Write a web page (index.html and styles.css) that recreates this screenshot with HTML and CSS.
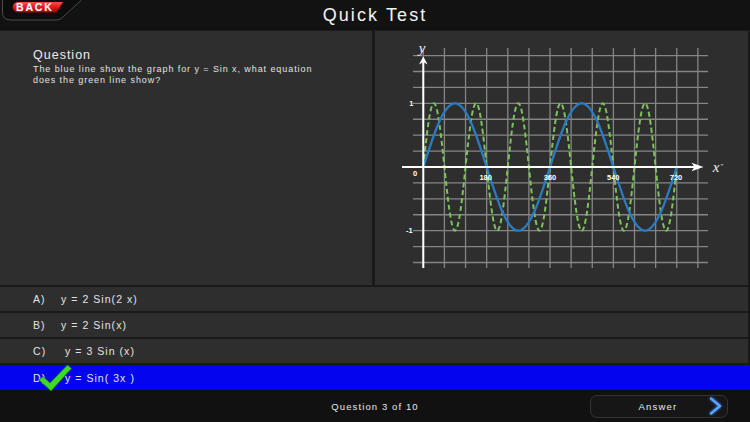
FILE: index.html
```html
<!DOCTYPE html>
<html>
<head>
<meta charset="utf-8">
<title>Quick Test</title>
<link rel="stylesheet" href="styles.css">
</head>
<body>
<div class="app">
  <header class="header">
    <a class="back">
      <svg class="back-shape" width="84" height="22" viewBox="0 0 84 22">
        <defs>
          <linearGradient id="redg" x1="0" y1="0" x2="0" y2="1">
            <stop offset="0" stop-color="#ff5050"/>
            <stop offset="0.5" stop-color="#e31515"/>
            <stop offset="1" stop-color="#900404"/>
          </linearGradient>
        </defs>
        <path d="M2.5 0 V12 Q2.5 20 10.5 20 H56 Q60 20 63 17 L81.5 0" fill="#0c0c0c" stroke="#4c4c4c" stroke-width="1"/>
        <path d="M18 2 H63 L56.5 12.5 H18 A5.25 5.25 0 0 1 18 2 Z" fill="url(#redg)"/>
      </svg>
      <span class="back-label">BACK</span>
    </a>
    <h1 class="title">Quick Test</h1>
  </header>

  <main class="main">
    <section class="question">
      <h2 class="q-title">Question</h2>
      <p class="q-text">The blue line show the graph for y = Sin x, what equation does the green line show?</p>
    </section>
    <section class="graph">
      <svg width="373" height="254" viewBox="0 0 373 254">
        <path d="M48.3 17V237 M69.42 17V237 M90.54 17V237 M111.66 17V237 M132.78 17V237 M153.9 17V237 M175.02 17V237 M196.14 17V237 M217.26 17V237 M238.38 17V237 M259.5 17V237 M280.62 17V237 M301.74 17V237 M322.86 17V237
                 M38 24.56H333 M38 40.48H333 M38 56.4H333 M38 72.32H333 M38 88.24H333 M38 104.16H333 M38 120.08H333
                 M38 151.92H333 M38 167.84H333 M38 183.76H333 M38 199.68H333 M38 215.6H333 M38 231.52H333"
              stroke="#858585" stroke-width="1.3" fill="none"/>
        <path d="M48.3 136
                 c3.44 -32.63 6.74 -63.7 10.56 -63.7 c3.82 0 7.12 31.07 10.56 63.7 c3.44 32.63 6.74 63.7 10.56 63.7 c3.82 0 7.12 -31.07 10.56 -63.7
                 c3.44 -32.63 6.74 -63.7 10.56 -63.7 c3.82 0 7.12 31.07 10.56 63.7 c3.44 32.63 6.74 63.7 10.56 63.7 c3.82 0 7.12 -31.07 10.56 -63.7
                 c3.44 -32.63 6.74 -63.7 10.56 -63.7 c3.82 0 7.12 31.07 10.56 63.7 c3.44 32.63 6.74 63.7 10.56 63.7 c3.82 0 7.12 -31.07 10.56 -63.7
                 c3.44 -32.63 6.74 -63.7 10.56 -63.7 c3.82 0 7.12 31.07 10.56 63.7 c3.44 32.63 6.74 63.7 10.56 63.7 c3.82 0 7.12 -31.07 10.56 -63.7
                 c3.44 -32.63 6.74 -63.7 10.56 -63.7 c3.82 0 7.12 31.07 10.56 63.7 c3.44 32.63 6.74 63.7 10.56 63.7 c3.82 0 7.12 -31.07 10.56 -63.7
                 c3.44 -32.63 6.74 -63.7 10.56 -63.7 c3.82 0 7.12 31.07 10.56 63.7 c3.44 32.63 6.74 63.7 10.56 63.7 c3.82 0 7.12 -31.07 10.56 -63.7"
              stroke="#7cc25a" stroke-width="2" stroke-dasharray="5 3" fill="none"/>
        <path d="M48.3 136
                 c10.33 -32.63 20.22 -63.7 31.68 -63.7 c11.46 0 21.35 31.07 31.68 63.7 c10.33 32.63 20.22 63.7 31.68 63.7 c11.46 0 21.35 -31.07 31.68 -63.7
                 c10.33 -32.63 20.22 -63.7 31.68 -63.7 c11.46 0 21.35 31.07 31.68 63.7 c10.33 32.63 20.22 63.7 31.68 63.7 c11.46 0 21.35 -31.07 31.68 -63.7"
              stroke="#2b7bc2" stroke-width="2.3" fill="none"/>
        <path d="M48.3 237V30 M27 136H320" stroke="#ffffff" stroke-width="2" fill="none"/>
        <polygon points="48.3,25.5 52.6,33.5 48.3,31 44,33.5" fill="#ffffff"/>
        <polygon points="328.5,136 316.5,131.8 319.5,136 316.5,140.2" fill="#ffffff"/>
        <text class="axis-name" x="47" y="22" text-anchor="middle">y</text>
        <text class="axis-name" x="341" y="141" text-anchor="middle">x</text>
        <text class="axis-mark" x="347" y="138" text-anchor="middle">"</text>
        <g class="tick">
          <text x="36.3" y="75">1</text>
          <text x="34.3" y="202">-1</text>
          <text x="40" y="144.5">0</text>
          <text x="110.7" y="148.5">180</text>
          <text x="175" y="148.5">360</text>
          <text x="238.3" y="148.5">540</text>
          <text x="301" y="148.5">720</text>
        </g>
      </svg>
    </section>
  </main>

  <section class="options">
    <div class="option"><span class="opt-key">A)</span><span class="opt-val">y = 2 Sin(2 x)</span></div>
    <div class="option"><span class="opt-key">B)</span><span class="opt-val">y = 2 Sin(x)</span></div>
    <div class="option"><span class="opt-key">C)</span><span class="opt-val">&nbsp;y = 3 Sin (x)</span></div>
    <div class="option selected">
      <span class="opt-key">D)</span><span class="opt-val">&nbsp;y = Sin( 3x )</span>
      <svg class="check" width="36" height="32" viewBox="0 0 36 32">
        <path d="M1 18 L5 14.5 L12 21 L29.5 3 L33.5 6.5 L13 29 Z" fill="#3bdc22" stroke="#1b7d0e" stroke-width="0.8" stroke-linejoin="round"/>
      </svg>
    </div>
  </section>

  <footer class="footer">
    <span></span>
    <span class="counter">Question 3 of 10</span>
    <button class="answer">
      <span></span>
      <span class="answer-label">Answer</span>
      <svg class="chev" width="14" height="18" viewBox="0 0 14 18">
        <polyline points="2,1.5 11,9 2,16.5" fill="none" stroke="#5aa6ff" stroke-width="2.4" stroke-linecap="round" stroke-linejoin="round"/>
      </svg>
    </button>
  </footer>
</div>
</body>
</html>
```

FILE: styles.css
```css
* { box-sizing: border-box; }

html, body {
  margin: 0;
  padding: 0;
}

body {
  width: 750px;
  height: 422px;
  overflow: hidden;
  background: #1a1a1a;
  font-family: "Liberation Sans", Arial, sans-serif;
  color: #e6e6e6;
}

.app {
  display: flex;
  flex-direction: column;
  height: 422px;
}

.header {
  position: relative;
  height: 30px;
  background: #121212;
  display: flex;
  align-items: center;
  justify-content: center;
}

.title {
  margin: 0;
  font-size: 18px;
  font-weight: normal;
  letter-spacing: 2.1px;
  color: #f2f2f2;
  line-height: 30px;
}

.back {
  position: absolute;
  left: 0;
  top: 0;
  width: 84px;
  height: 22px;
}

.back-shape {
  display: block;
}

.back-label {
  position: absolute;
  left: 16px;
  top: 1.3px;
  font-size: 10.5px;
  line-height: 12px;
  font-weight: bold;
  letter-spacing: 1.8px;
  color: #ffffff;
  text-shadow: 0 0 2px #ff3a3a;
}

.main {
  height: 254px;
  margin-top: 1px;
  display: flex;
  gap: 3px;
  padding-right: 2px;
}

.question {
  width: 372px;
  background: #2e2e2e;
  padding: 16.7px 33px 0 33px;
}

.q-title {
  margin: 0;
  font-size: 12.5px;
  line-height: 14px;
  font-weight: normal;
  letter-spacing: 1px;
  color: #ececec;
}

.q-text {
  max-width: 288px;
  margin: 2.3px 0 0 0;
  font-size: 9px;
  line-height: 11.5px;
  letter-spacing: 0.92px;
  color: #e2e2e2;
}

.graph {
  flex: 1;
  background: #2e2e2e;
}

.graph svg {
  display: block;
}

.axis-name {
  font-family: "Liberation Serif", serif;
  font-style: italic;
  font-size: 15px;
  fill: #f0f0f0;
}

.axis-mark {
  font-family: "Liberation Sans", sans-serif;
  font-size: 7px;
  fill: #e0e0e0;
}

.tick text {
  font-family: "Liberation Sans", sans-serif;
  font-weight: bold;
  font-size: 7.5px;
  fill: #ffffff;
  text-anchor: middle;
}

.options {
  margin-top: 2px;
  display: flex;
  flex-direction: column;
  gap: 2px;
}

.option {
  position: relative;
  height: 24px;
  margin-right: 2px;
  background: #2e2e2e;
  display: flex;
  align-items: center;
  padding-left: 33px;
  font-size: 10.5px;
  letter-spacing: 1.05px;
  color: #e4e4e4;
}

.option.selected {
  height: 25px;
  margin-right: 0;
  background: #0404ee;
}

.opt-key {
  width: 28px;
}

.check {
  position: absolute;
  left: 38px;
  top: -3px;
}

.footer {
  height: 32px;
  background: #111111;
  display: grid;
  grid-template-columns: 1fr auto 1fr;
  align-items: center;
}

.counter {
  font-size: 9.5px;
  letter-spacing: 1.1px;
  color: #e8e8e8;
}

.answer {
  justify-self: end;
  margin-right: 22px;
  width: 138px;
  height: 23px;
  padding: 0 2px 0 0;
  border: 1px solid #333333;
  border-radius: 7px;
  background: #161616;
  display: grid;
  grid-template-columns: 16px 1fr 16px;
  align-items: center;
  font-family: "Liberation Sans", Arial, sans-serif;
  font-size: 9.5px;
  letter-spacing: 1.2px;
  color: #ececec;
}

.answer-label {
  text-align: center;
}

.chev {
  display: block;
  filter: drop-shadow(0 0 1.5px #2f7dff);
}
```
